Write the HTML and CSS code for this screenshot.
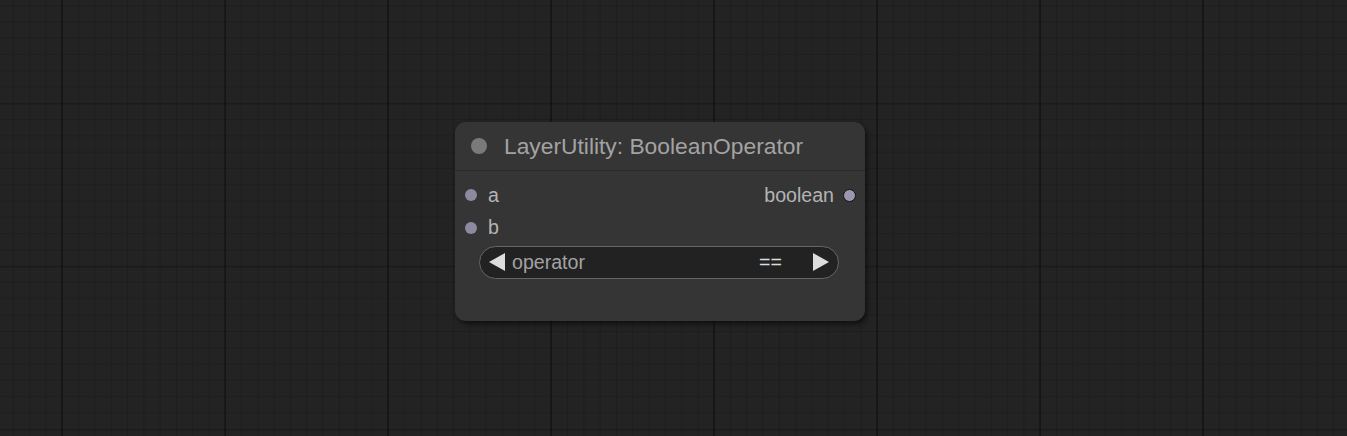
FILE: index.html
```html
<!DOCTYPE html>
<html>
<head>
<meta charset="utf-8">
<link rel="stylesheet" href="styles.css">
</head>
<body>
<div class="canvas">
  <div class="node">
    <div class="title">
      <span class="collapse-dot"></span>
      <span class="title-text">LayerUtility: BooleanOperator</span>
    </div>
    <div class="body">
      <div class="row">
        <div class="slot in"><span class="dot"></span><span class="label">a</span></div>
        <div class="slot out"><span class="label">boolean</span><span class="dot out-dot"></span></div>
      </div>
      <div class="row">
        <div class="slot in"><span class="dot"></span><span class="label">b</span></div>
      </div>
      <div class="widget">
        <svg class="arrow" width="16" height="18" viewBox="0 0 16 18"><polygon points="16,0 16,18 0,9" fill="#ddd"/></svg>
        <span class="w-name">operator</span>
        <span class="w-value">==</span>
        <svg class="arrow" width="16" height="18" viewBox="0 0 16 18"><polygon points="0,0 0,18 16,9" fill="#ddd"/></svg>
      </div>
    </div>
  </div>
</div>
</body>
</html>
```

FILE: styles.css
```css
html, body {
  margin: 0;
  padding: 0;
}
body {
  width: 1347px;
  height: 436px;
  overflow: hidden;
  font-family: "Liberation Sans", Arial, sans-serif;
}
.canvas {
  position: relative;
  width: 1347px;
  height: 436px;
  background-color: #232323;
  background-image:
    linear-gradient(to right, rgba(0,0,0,0.3) 0, rgba(0,0,0,0.3) 2px, transparent 2px),
    linear-gradient(to bottom, rgba(0,0,0,0.12) 0, rgba(0,0,0,0.12) 2px, transparent 2px),
    linear-gradient(to right, rgba(0,0,0,0.14) 0, rgba(0,0,0,0.14) 1px, transparent 1px),
    linear-gradient(to bottom, rgba(0,0,0,0.14) 0, rgba(0,0,0,0.14) 1px, transparent 1px);
  background-size: 163px 163px, 163px 163px, 16.3px 16.3px, 16.3px 16.3px;
  background-position: 61px 0, 0 103px, 13px 0, 0 5px;
}
.node {
  position: absolute;
  left: 455px;
  top: 122px;
  width: 410px;
  height: 199px;
  background: #353535;
  border-radius: 11px;
  box-shadow: 2px 3px 5px rgba(0,0,0,0.55);
  display: flex;
  flex-direction: column;
}
.title {
  height: 48px;
  border-bottom: 1px solid #2a2a2a;
  display: flex;
  align-items: center;
  padding-left: 16px;
  box-sizing: content-box;
}
.collapse-dot {
  width: 16px;
  height: 16px;
  border-radius: 50%;
  background: #7a7a7a;
  margin-right: 17px;
  flex: none;
}
.title-text {
  color: #a3a3a3;
  font-size: 22.8px;
  line-height: 1;
  margin-top: 1px;
}
.body {
  padding-top: 8px;
  display: flex;
  flex-direction: column;
}
.row {
  height: 32.6px;
  display: flex;
  align-items: center;
  justify-content: space-between;
  padding: 0 9px 0 10px;
}
.slot {
  display: flex;
  align-items: center;
}
.dot {
  width: 12px;
  height: 12px;
  border-radius: 50%;
  background: #8c8aa0;
  flex: none;
}
.out-dot {
  width: 11px;
  height: 11px;
  border: 1.5px solid #111;
  background: #9a98ae;
}
.slot.in .label {
  margin-left: 11px;
}
.slot.out .label {
  margin-right: 9px;
}
.label {
  color: #b4b4b4;
  font-size: 19.6px;
  line-height: 1;
}
.widget {
  margin: 1.5px 26px 0 24px;
  height: 33px;
  box-sizing: border-box;
  border: 1.5px solid #666;
  border-radius: 17px;
  background: #222;
  display: flex;
  align-items: center;
  padding: 0 9px 0 9px;
}
.arrow {
  flex: none;
}
.w-name {
  color: #a3a3a3;
  font-size: 19.6px;
  margin-left: 7px;
  flex: 1;
}
.w-value {
  color: #dcdcdc;
  font-size: 19.6px;
  margin-right: 31px;
}
```
